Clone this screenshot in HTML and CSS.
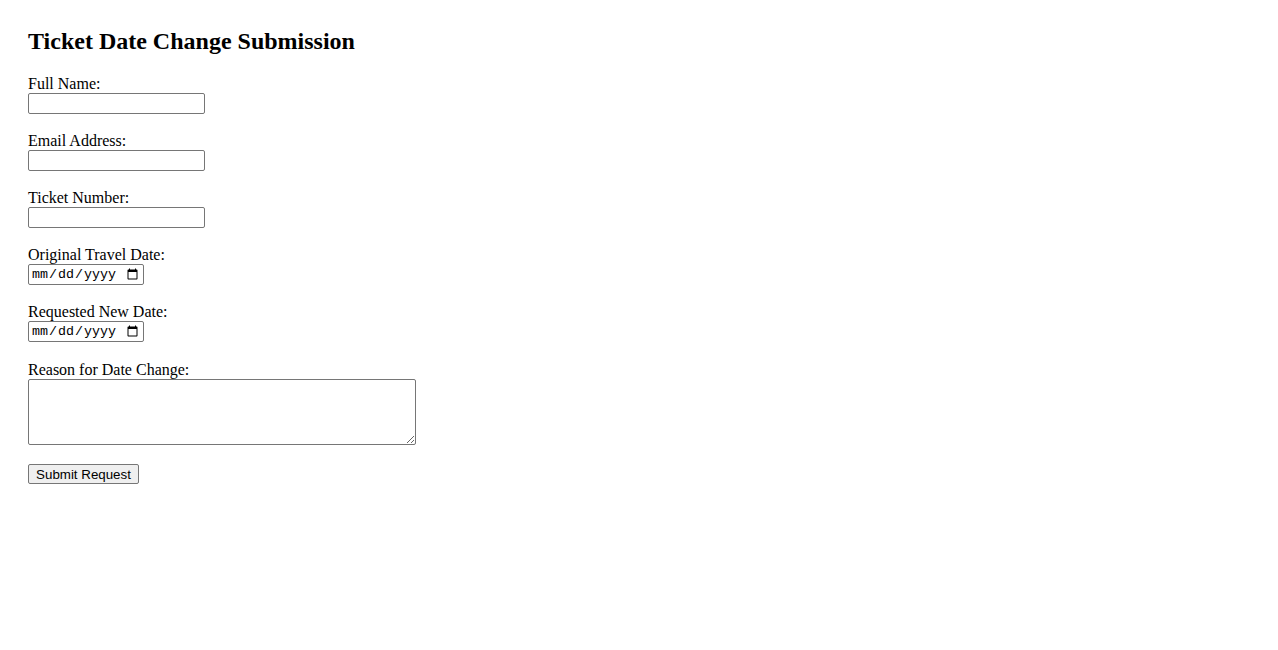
FILE: index.html
```html
<!DOCTYPE html>
<html lang="en">
<head>
<meta charset="utf-8">
<title>Ticket Date Change Submission</title>
<link rel="stylesheet" href="styles.css">
</head>
<body>
<h2 class="title">Ticket Date Change Submission</h2>
<form class="form">
  <div class="group">
    <label class="label" for="name">Full Name:</label>
    <input class="text" type="text" id="name">
  </div>
  <div class="group">
    <label class="label" for="email">Email Address:</label>
    <input class="text" type="email" id="email">
  </div>
  <div class="group">
    <label class="label" for="ticket">Ticket Number:</label>
    <input class="text" type="text" id="ticket">
  </div>
  <div class="group">
    <label class="label" for="orig">Original Travel Date:</label>
    <input class="date" type="date" id="orig">
  </div>
  <div class="group group-wide">
    <label class="label" for="new">Requested New Date:</label>
    <input class="date" type="date" id="new">
  </div>
  <div class="group group-last">
    <label class="label" for="reason">Reason for Date Change:</label>
    <textarea class="area" id="reason"></textarea>
  </div>
  <button class="submit" type="submit">Submit Request</button>
</form>
</body>
</html>
```
FILE: styles.css
```css
html, body {
  background: #ffffff;
}
body {
  margin: 0;
  padding: 28px;
  font-family: "Liberation Serif", "Times New Roman", serif;
  font-size: 16px;
  color: #000000;
}
.title {
  margin: 0 0 20.4px 0;
  font-size: 24px;
  font-weight: bold;
  line-height: 27px;
}
.form {
  display: flex;
  flex-direction: column;
  align-items: flex-start;
}
.group {
  display: flex;
  flex-direction: column;
  align-items: flex-start;
  margin-bottom: 18px;
}
.group-wide {
  margin-bottom: 18.7px;
}
.group-last {
  margin-bottom: 19px;
}
.label {
  display: block;
  line-height: 18px;
}
.text,
.date,
.area {
  display: block;
  box-sizing: border-box;
  margin: 0;
  border: 1px solid #767676;
  border-radius: 2px;
  background: #ffffff;
}
.text {
  width: 177px;
  height: 21px;
  padding: 1px 2px;
  font-family: "Liberation Sans", Arial, sans-serif;
  font-size: 13.33px;
}
.date {
  width: 116px;
  height: 21px;
  padding: 1px 2px;
  font-family: "Liberation Mono", "Courier New", monospace;
  font-size: 13.33px;
}
.area {
  width: 388px;
  height: 66px;
  padding: 2px;
  font-family: "Liberation Mono", monospace;
  font-size: 13.33px;
}
.submit {
  box-sizing: border-box;
  width: 111px;
  height: 20px;
  margin: 0;
  padding: 1px 6px;
  font-family: "Liberation Sans", Arial, sans-serif;
  font-size: 13.33px;
  color: #000000;
  background: #efefef;
  border: 1px solid #767676;
  border-radius: 2px;
}
```
